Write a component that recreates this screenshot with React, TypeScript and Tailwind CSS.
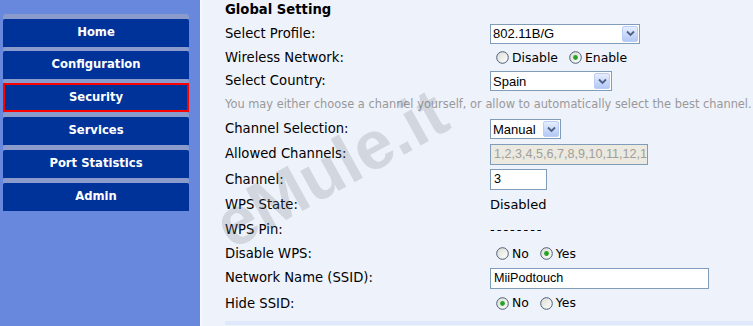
import React from "react";

const VERDANA = { fontFamily: '"DejaVu Sans", Verdana, sans-serif' };
const ARIAL = { fontFamily: '"Liberation Sans", Arial, sans-serif' };

function Arrow() {
  return (
    <div className="w-[16px] h-[16px] mr-[1px] rounded-[2px] border border-[#bccdf5] bg-gradient-to-b from-[#e6eeff] to-[#b4c8f5] flex items-center justify-center shrink-0">
      <svg width="9" height="7" viewBox="0 0 9 7">
        <path d="M1 1.5 L4.5 5 L8 1.5" fill="none" stroke="#4d6185" strokeWidth="1.8" />
      </svg>
    </div>
  );
}

function Select({ value, w }: { value: string; w: string }) {
  return (
    <div className={`${w} h-[20px] border border-[#7f9db9] bg-white flex items-center justify-between`}>
      <span className="pl-[2px] text-[13px] text-black leading-none" style={ARIAL}>{value}</span>
      <Arrow />
    </div>
  );
}

function Radio({ checked }: { checked: boolean }) {
  return (
    <svg width="13" height="13" viewBox="0 0 13 13" className="shrink-0">
      <defs>
        <linearGradient id="rg" x1="0" y1="0" x2="1" y2="1">
          <stop offset="0" stopColor="#dcdcd4" />
          <stop offset="1" stopColor="#ffffff" />
        </linearGradient>
      </defs>
      <circle cx="6.5" cy="6.5" r="5.8" fill="url(#rg)" stroke="#4a5d78" strokeWidth="1" />
      {checked && <circle cx="6.5" cy="6.5" r="2.4" fill="#26a325" />}
    </svg>
  );
}

function RadioPair({ a, b, first }: { a: string; b: string; first: boolean }) {
  return (
    <div className="flex items-center pl-[6px] text-[12.4px] text-black" style={VERDANA}>
      <Radio checked={first} />
      <span className="ml-[3px] mr-[11px]">{a}</span>
      <Radio checked={!first} />
      <span className="ml-[3px]">{b}</span>
    </div>
  );
}

function Input({ value, w, disabled }: { value: string; w: string; disabled?: boolean }) {
  return (
    <div
      className={`${w} h-[21px] border border-[#7f9db9] flex items-center overflow-hidden whitespace-nowrap ${disabled ? "bg-[#ebe9e0] text-[#a09f98]" : "bg-white text-black"}`}
    >
      <span className="pl-[3px] text-[12.6px] leading-none" style={ARIAL}>{value}</span>
    </div>
  );
}

const navItems = ["Home", "Configuration", "Security", "Services", "Port Statistics", "Admin"];

type RowT = { label: string; h: string; control: React.ReactNode };

function Row({ r }: { r: RowT }) {
  return (
    <div className={`flex items-center ${r.h}`}>
      <div className="w-[265px] shrink-0 text-[13.2px] text-black" style={VERDANA}>{r.label}</div>
      <div className="flex items-center">{r.control}</div>
    </div>
  );
}

export default function App() {
  const rows: RowT[] = [
    { label: "Select Profile:", h: "h-[27px]", control: <Select value="802.11B/G" w="w-[150px]" /> },
    { label: "Wireless Network:", h: "h-[22px]", control: <RadioPair a="Disable" b="Enable" first={false} /> },
    { label: "Select Country:", h: "h-[24px]", control: <Select value="Spain" w="w-[122px]" /> },
  ];
  const rows2: RowT[] = [
    { label: "Channel Selection:", h: "h-[24px]", control: <Select value="Manual" w="w-[71px]" /> },
    { label: "Allowed Channels:", h: "h-[26px]", control: <Input value="1,2,3,4,5,6,7,8,9,10,11,12,13" w="w-[158px]" disabled /> },
    { label: "Channel:", h: "h-[25px]", control: <Input value="3" w="w-[57px]" /> },
    { label: "WPS State:", h: "h-[25px]", control: <span className="text-[13px] text-black" style={VERDANA}>Disabled</span> },
    { label: "WPS Pin:", h: "h-[25px]", control: <span className="text-[13px] text-black tracking-[2px]" style={VERDANA}>--------</span> },
    { label: "Disable WPS:", h: "h-[24px]", control: <RadioPair a="No" b="Yes" first={false} /> },
    { label: "Network Name (SSID):", h: "h-[24px]", control: <Input value="MiiPodtouch" w="w-[219px]" /> },
    { label: "Hide SSID:", h: "h-[27px]", control: <RadioPair a="No" b="Yes" first={true} /> },
  ];

  return (
    <div className="w-[753px] h-[326px] flex overflow-hidden bg-[#eef2fb]">
      <div className="w-[200px] h-full bg-[#6888dd] pt-[14px] pl-[3px] shrink-0">
        {navItems.map((n, i) => {
          const sec = n === "Security";
          const grey = i === 0 ? "h-[5px]" : i <= 2 ? "h-[4px]" : "h-[5px]";
          return (
            <div key={n} className="w-[186px]">
              <div className={`${grey} bg-[#8a9bcc] rounded-t-[3px]`} />
              <div
                className={`flex items-center justify-center text-white font-bold text-[11.6px] bg-[#003399] ${sec ? "h-[29px] border-2 border-[#ff0000]" : "h-[28px] rounded-t-[2px]"}`}
                style={VERDANA}
              >
                {n}
              </div>
            </div>
          );
        })}
      </div>
      <div className="w-[2px] h-full bg-[#f6f8fd] shrink-0" />
      <div className="relative flex-1 h-full pl-[23px] overflow-hidden">
        <div className="h-[20px] flex items-center text-[13.2px] font-bold text-black" style={VERDANA}>Global Setting</div>
        {rows.map((r) => <Row key={r.label} r={r} />)}
        <div className="h-[24px] flex items-center whitespace-nowrap text-[11.4px] text-[#999999]" style={VERDANA}>
          You may either choose a channel yourself, or allow to automatically select the best channel.
        </div>
        {rows2.map((r) => <Row key={r.label} r={r} />)}
        <div className="mt-[4px] h-[4px] bg-[#e0e9fb]" />
        <div
          className="pointer-events-none absolute left-[2px] top-[134px] -rotate-[29deg] origin-center text-[68px] font-bold leading-none text-[rgba(110,112,125,0.22)] whitespace-nowrap"
          style={ARIAL}
        >
          eMule.it
        </div>
      </div>
    </div>
  );
}
